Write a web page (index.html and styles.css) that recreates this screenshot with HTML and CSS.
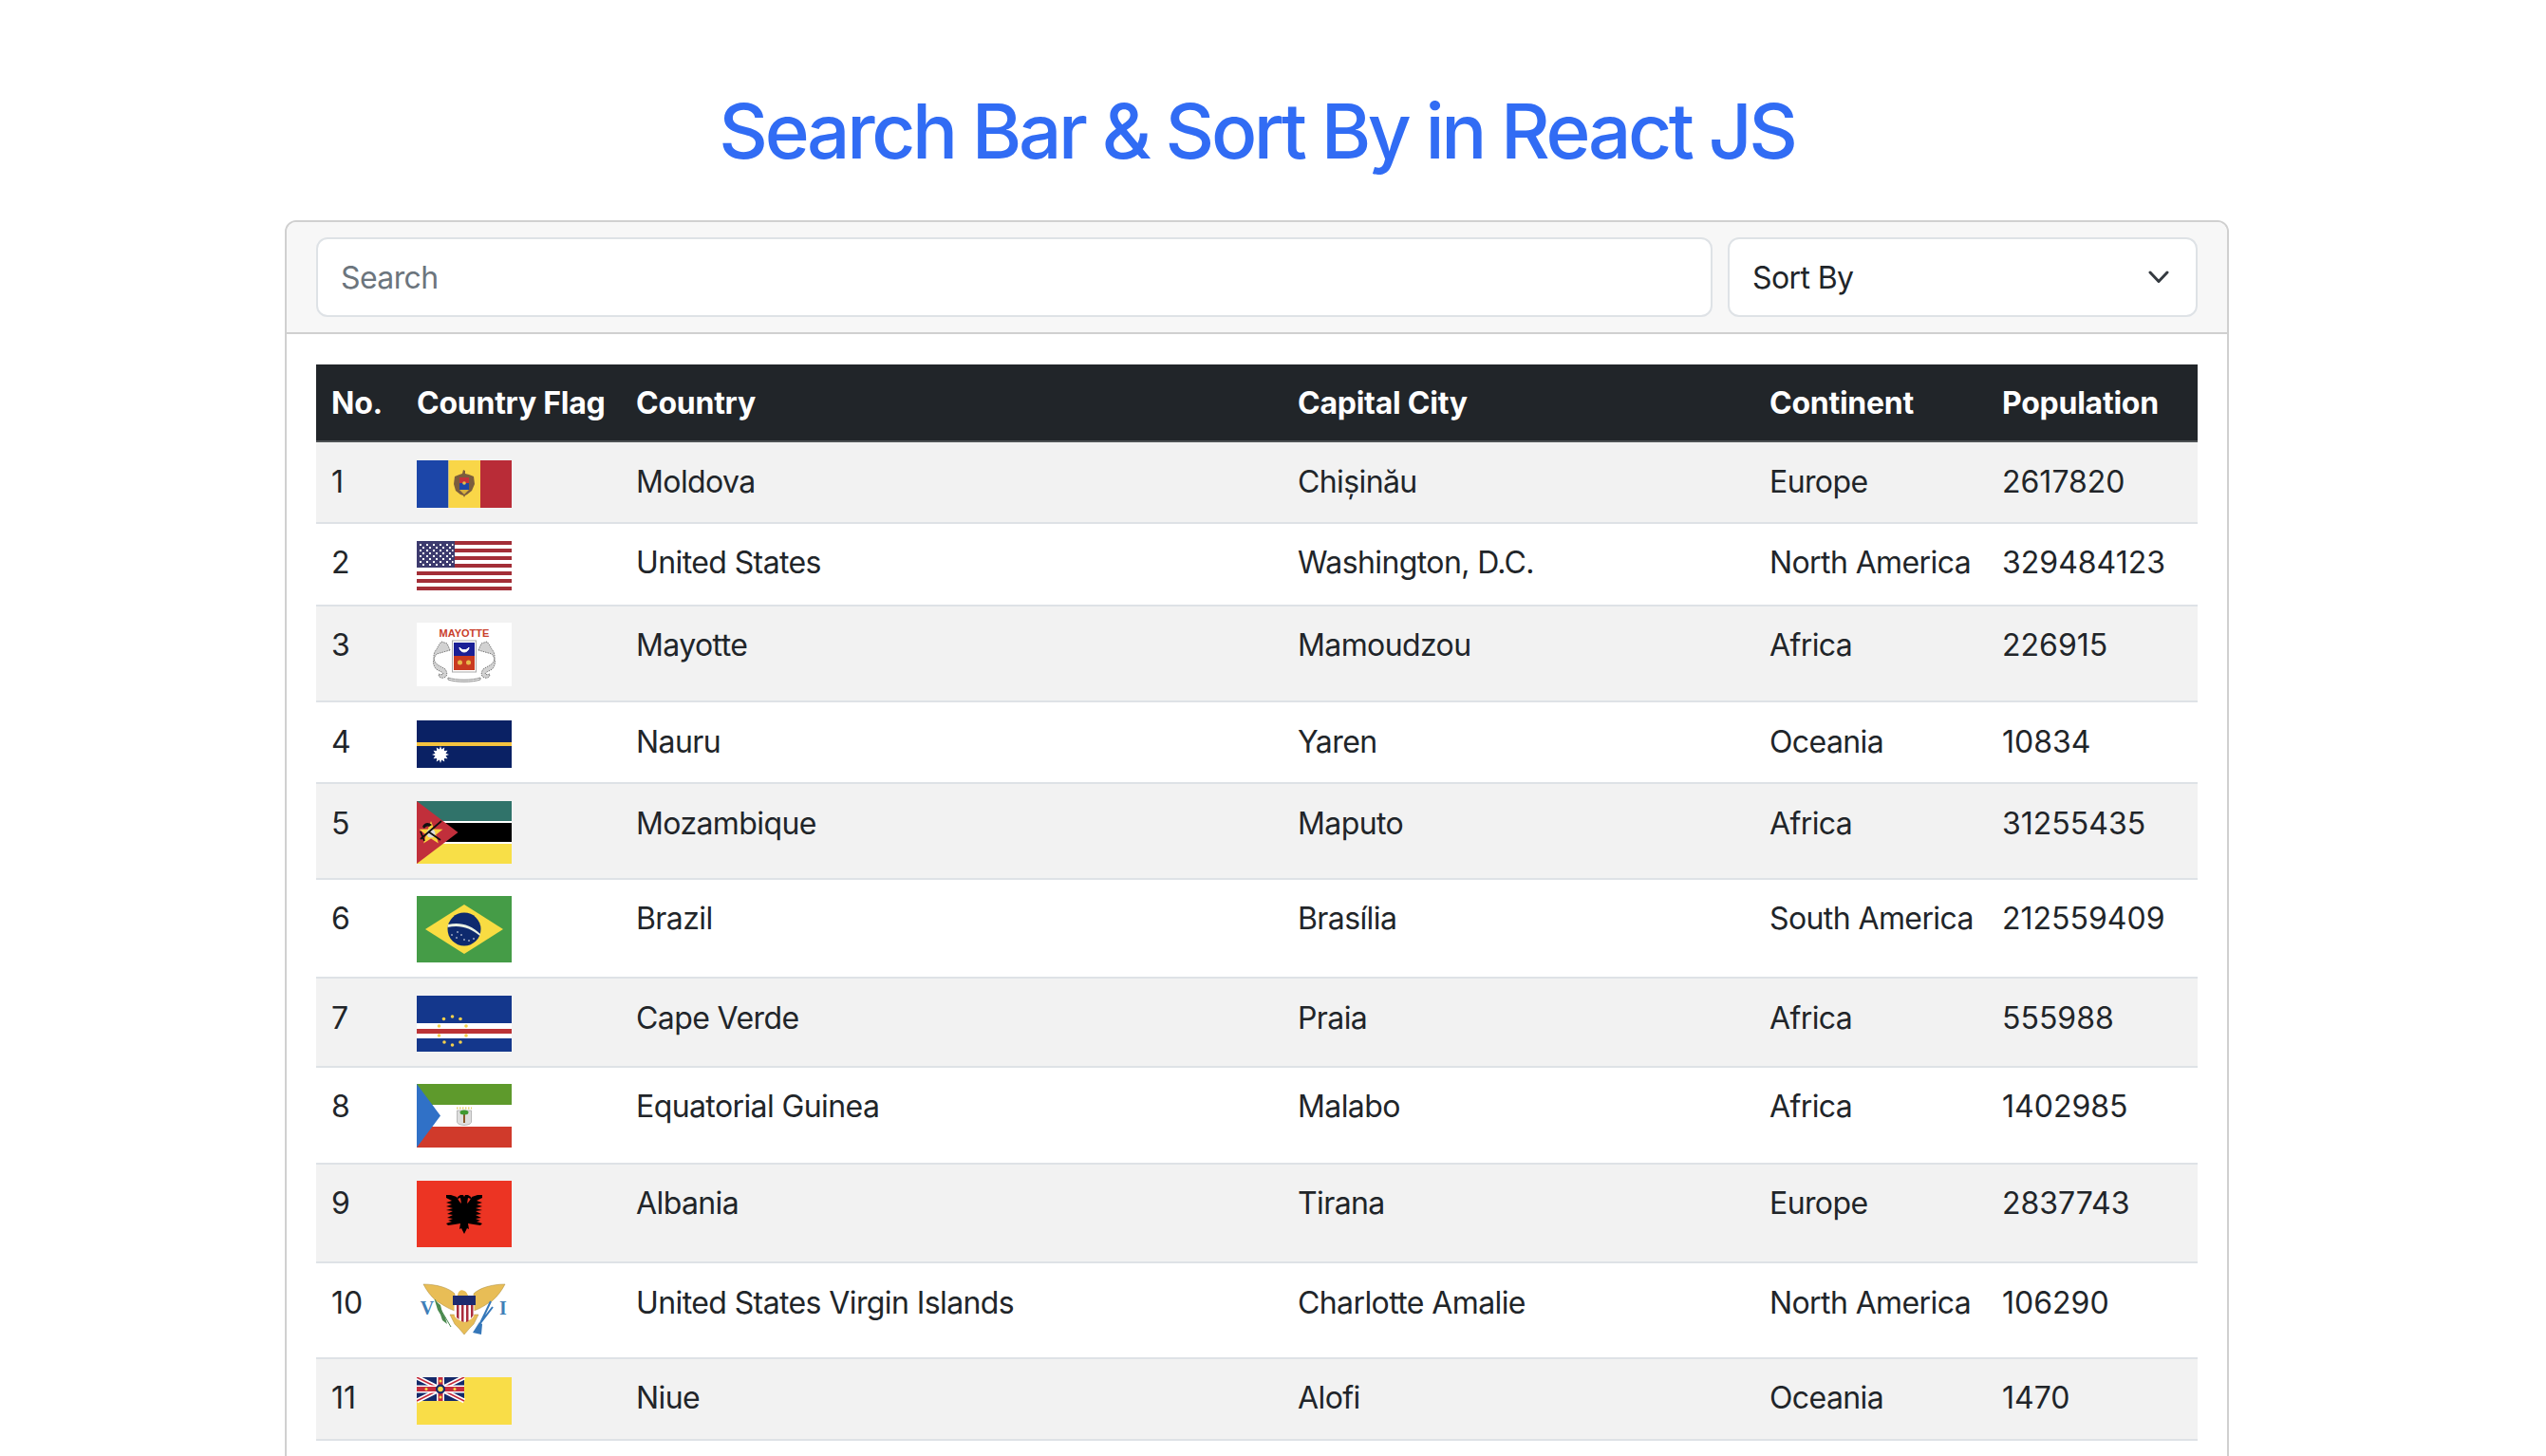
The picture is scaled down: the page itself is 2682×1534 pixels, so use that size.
FILE: index.html
```html
<!DOCTYPE html>
<html lang="en">
<head>
<meta charset="utf-8">
<title>Search Bar &amp; Sort By in React JS</title>
<link rel="stylesheet" href="styles.css">
</head>
<body>
<main class="page">
  <h1 class="title">Search Bar &amp; Sort By in React JS</h1>
  <section class="card">
    <header class="card-header">
      <input class="search" type="text" placeholder="Search">
      <div class="select">
        <span>Sort By</span>
        <svg class="chevron" width="22" height="14" viewBox="0 0 22 14"><path d="M2 2l9 9.500 9-9.500" fill="none" stroke="#343a40" stroke-width="3" stroke-linecap="round" stroke-linejoin="round"/></svg>
      </div>
    </header>
    <div class="card-body">
      <table class="table">
        <colgroup><col class="c-no"><col class="c-flag"><col class="c-country"><col class="c-capital"><col class="c-continent"><col class="c-pop"></colgroup>
        <thead>
          <tr><th>No.</th><th>Country Flag</th><th>Country</th><th>Capital City</th><th>Continent</th><th>Population</th></tr>
        </thead>
        <tbody>
          <tr><td>1</td><td>
            <svg class="flag" width="100" height="50" viewBox="0 0 100 50"><rect width="33.500" height="50" fill="#1c46a8"/><rect x="33.500" width="33.500" height="50" fill="#f9d648"/><rect x="67" width="33" height="50" fill="#b92c37"/><path d="M40 17l5-2 3-1 1-4 2 1 0 3 4 1 5 2 1 8-3 7-5 4-2 1-1 2-1-2-3-1-5-4-2-7z" fill="#7b5d3d"/><rect x="45" y="18" width="10" height="6" fill="#c5303a"/><rect x="45" y="24" width="10" height="7" fill="#1c46a8"/><path d="M45 31h10l-5 5z" fill="#d8b23c"/><circle cx="50" cy="24" r="1.800" fill="#e3c24a"/></svg>
          </td><td>Moldova</td><td>Chișinău</td><td>Europe</td><td>2617820</td></tr>
          <tr><td>2</td><td>
            <svg class="flag" width="100" height="52" viewBox="0 0 100 52"><rect width="100" height="52" fill="#fff"/><path d="M0 0h100v4H0zM0 8h100v4H0zM0 16h100v4H0zM0 24h100v4H0zM0 32h100v4H0zM0 40h100v4H0zM0 48h100v4H0z" fill="#a32e37"/><rect width="40" height="28" fill="#3d3b6e"/><g fill="#fff"><path d="M3 3h2v2H3zM10 3h2v2h-2zM17 3h2v2h-2zM24 3h2v2h-2zM31 3h2v2h-2zM37 3h1.500v2H37zM6 6h2v2H6zM13 6h2v2h-2zM20 6h2v2h-2zM27 6h2v2h-2zM34 6h2v2h-2zM3 9h2v2H3zM10 9h2v2h-2zM17 9h2v2h-2zM24 9h2v2h-2zM31 9h2v2h-2zM37 9h1.500v2H37zM6 12h2v2H6zM13 12h2v2h-2zM20 12h2v2h-2zM27 12h2v2h-2zM34 12h2v2h-2zM3 15h2v2H3zM10 15h2v2h-2zM17 15h2v2h-2zM24 15h2v2h-2zM31 15h2v2h-2zM37 15h1.500v2H37zM6 18h2v2H6zM13 18h2v2h-2zM20 18h2v2h-2zM27 18h2v2h-2zM34 18h2v2h-2zM3 21h2v2H3zM10 21h2v2h-2zM17 21h2v2h-2zM24 21h2v2h-2zM31 21h2v2h-2zM37 21h1.500v2H37zM6 24h2v2H6zM13 24h2v2h-2zM20 24h2v2h-2zM27 24h2v2h-2zM34 24h2v2h-2z"/></g></svg>
          </td><td>United States</td><td>Washington, D.C.</td><td>North America</td><td>329484123</td></tr>
          <tr><td>3</td><td>
            <svg class="flag" width="100" height="67" viewBox="0 0 100 67"><rect width="100" height="67" fill="#fff"/><text class="flag-word" x="50" y="14.500" text-anchor="middle">MAYOTTE</text><rect x="37.500" y="19" width="25" height="33" fill="#fff" stroke="#aaa"/><rect x="39" y="21" width="22" height="14" fill="#1a1f96"/><rect x="39" y="35" width="22" height="15" fill="#c93a20"/><path d="M45 26a5 5 0 0 0 10 0a6 6 0 0 1-10 0z" fill="#fff" stroke="#fff"/><circle cx="45.500" cy="42" r="2.500" fill="#e8b94a"/><circle cx="54.500" cy="42" r="2.500" fill="#e8b94a"/><g fill="#d2d2d2" stroke="#777" stroke-width="1" stroke-dasharray="1.500 1"><path d="M35 29l-3-7-6-2-3 4-2 4c-3 3-4 8-2 13 2 4 7 5 11 8 2 3 3 7-1 9-4 1-6-1-6-4 2 1 4 1 5 0-1-3-7-3-9-7-3-6-1-10 2-14z"/><path d="M65 29l3-7 6-2 3 4 2 4c3 3 4 8 2 13-2 4-7 5-11 8-2 3-3 7 1 9 4 1 6-1 6-4-2 1-4 1-5 0 1-3 7-3 9-7 3-6 1-10-2-14z"/></g><path d="M33 58c8 3 26 3 34 0l0 2c-8 3-26 3-34 0z" fill="none" stroke="#888"/></svg>
          </td><td>Mayotte</td><td>Mamoudzou</td><td>Africa</td><td>226915</td></tr>
          <tr><td>4</td><td>
            <svg class="flag" width="100" height="50" viewBox="0 0 100 50"><rect width="100" height="50" fill="#0a2164"/><rect y="23" width="100" height="4" fill="#f5c33f"/><path d="M25 27l1.200 3.500 3-2 -.300 3.600 3.600-.400-2 3 3.500 1.300-3.500 1.300 2 3-3.600-.400.300 3.600-3-2-1.200 3.500-1.200-3.500-3 2 .300-3.600-3.600.400 2-3-3.500-1.300 3.500-1.300-2-3 3.600.400-.300-3.600 3 2z" fill="#fff"/></svg>
          </td><td>Nauru</td><td>Yaren</td><td>Oceania</td><td>10834</td></tr>
          <tr><td>5</td><td>
            <svg class="flag" width="100" height="66" viewBox="0 0 100 66"><rect width="100" height="21" fill="#30736a"/><rect y="21" width="100" height="24" fill="#fff"/><rect y="23" width="100" height="20" fill="#000"/><rect y="45" width="100" height="21" fill="#f8df47"/><path d="M0 0l43.500 33L0 66z" fill="#c12f3b"/><path d="M15 21l3.200 8.600 9.300.200-7.300 5.800 2.600 9-7.800-5.200-7.800 5.200 2.600-9-7.300-5.800 9.300-.200z" fill="#f8d23c"/><circle cx="15" cy="34" r="4.500" fill="#ddd"/><path d="M4 40l22-19M8 42l-4-10M25 41L12 32" fill="none" stroke="#111" stroke-width="1.800"/><path d="M6 27c2-5 7-5 10-2l-3 2c-2-1-4 0-5 2z" fill="#111"/></svg>
          </td><td>Mozambique</td><td>Maputo</td><td>Africa</td><td>31255435</td></tr>
          <tr><td>6</td><td>
            <svg class="flag" width="100" height="70" viewBox="0 0 100 70"><rect width="100" height="70" fill="#459c47"/><path d="M9 35L50 9l41 26-41 26z" fill="#f9dc42"/><circle cx="50" cy="35" r="17.500" fill="#0e2a6e"/><path d="M33 30c12-3 24 0 34 10l-.500 2c-10-9-22-12-34-9z" fill="#e8f0e4"/><g fill="#fff"><circle cx="37" cy="41" r=".8"/><circle cx="42" cy="44" r=".8"/><circle cx="47" cy="41" r=".8"/><circle cx="50" cy="46" r=".8"/><circle cx="55" cy="47" r=".8"/><circle cx="60" cy="45" r=".8"/><circle cx="43" cy="38" r=".8"/></g></svg>
          </td><td>Brazil</td><td>Brasília</td><td>South America</td><td>212559409</td></tr>
          <tr><td>7</td><td>
            <svg class="flag" width="100" height="59" viewBox="0 0 100 59"><rect width="100" height="59" fill="#14378c"/><rect y="29" width="100" height="16" fill="#fff"/><rect y="35" width="100" height="5" fill="#bc3336"/><g fill="#f3d04c"><circle cx="23.500" cy="32" r="1.800"/><circle cx="28.500" cy="24.500" r="1.800"/><circle cx="37.500" cy="22" r="1.800"/><circle cx="46" cy="24.500" r="1.800"/><circle cx="52" cy="32" r="1.800"/><circle cx="23.500" cy="42" r="1.800"/><circle cx="52" cy="42" r="1.800"/><circle cx="29" cy="49" r="1.800"/><circle cx="37.500" cy="52" r="1.800"/><circle cx="46" cy="49" r="1.800"/></g></svg>
          </td><td>Cape Verde</td><td>Praia</td><td>Africa</td><td>555988</td></tr>
          <tr><td>8</td><td>
            <svg class="flag" width="100" height="67" viewBox="0 0 100 67"><rect width="100" height="22" fill="#5e9a2c"/><rect y="23" width="100" height="21" fill="#fff"/><rect y="45" width="100" height="22" fill="#d03a2b"/><path d="M0 0l25 33.500L0 67z" fill="#3071c7"/><path d="M42.500 28h15v12c0 2-4 3.500-7.500 3.500s-7.500-1.500-7.500-3.500z" fill="#dedede" stroke="#aaa" stroke-width=".8"/><rect x="49" y="30" width="2" height="11" fill="#8a5a2b"/><ellipse cx="50" cy="30" rx="4.500" ry="2.500" fill="#3f9a32"/><path d="M42 25.500h16" stroke="#e3cf6d" stroke-width="2" stroke-dasharray="1.500 1.500"/></svg>
          </td><td>Equatorial Guinea</td><td>Malabo</td><td>Africa</td><td>1402985</td></tr>
          <tr><td>9</td><td>
            <svg class="flag" width="100" height="70" viewBox="0 0 100 70"><rect width="100" height="70" fill="#ec3423"/><g fill="#000"><path d="M50 56L47 50 45 51 46 45 40 46 33 47 31 45 37 43 33 42 38 40 32 39 38 36 32 35 38 32 31 31 38 29 31 27 37 25 31 23 37 21 31 18 31 15 36 15 42 17 45 22 47 24 46 18 43 19 43 17 46 15 49 15 50 17z"/><path d="M50 56L53 50 55 51 54 45 60 46 67 47 69 45 63 43 67 42 62 40 68 39 62 36 68 35 62 32 69 31 62 29 69 27 63 25 69 23 63 21 69 18 69 15 64 15 58 17 55 22 53 24 54 18 57 19 57 17 54 15 51 15 50 17z"/></g></svg>
          </td><td>Albania</td><td>Tirana</td><td>Europe</td><td>2837743</td></tr>
          <tr><td>10</td><td>
            <svg class="flag" width="100" height="66" viewBox="0 0 100 66"><path d="M7 4c14 0 27 4 33 10v18c-9-3-13-7-19-10C15 17 10 10 7 4z" fill="#e8bd56" stroke="#a98a3c" stroke-width=".5"/><path d="M93 4c-14 0-27 4-33 10v18c9-3 13-7 19-10 6-5 11-12 14-18z" fill="#e8bd56" stroke="#a98a3c" stroke-width=".5"/><path d="M43 17c0-6 4-8 7-6 3 1 4 5 6 9H44z" fill="#e8bd56"/><path d="M35 36l5 10 4 4 6 7 6-7 4-4 5-10z" fill="#e8bd56" stroke="#a98a3c" stroke-width=".5"/><rect x="38" y="16" width="24" height="10" fill="#1d2a6e"/><path d="M39.500 26h21v9c0 5-5 7-10.500 9-5.500-2-10.500-4-10.500-9z" fill="#fff"/><path d="M42 26h2.500v15L42 39zM47 26h2.500v18L47 43zM52 26h2.500v17L52 44zM57 26h2.500v11L57 40z" fill="#a92c3c"/><path d="M19 20l17 29" fill="none" stroke="#4b8a4f" stroke-width="1"/><path d="M19 21l6 5 2 8 3 5 2 7-5-4-2-6-3-5z" fill="#4b8a4f"/><path d="M78 22l-11 23M80 28l-13 17" fill="none" stroke="#3577b9" stroke-width="2"/><path d="M66 44l-7 11 9 2 1-11z" fill="#3577b9"/><text class="flag-letter" x="11" y="36" text-anchor="middle">V</text><text class="flag-letter" x="91" y="36" text-anchor="middle">I</text></svg>
          </td><td>United States Virgin Islands</td><td>Charlotte Amalie</td><td>North America</td><td>106290</td></tr>
          <tr><td>11</td><td>
            <svg class="flag" width="100" height="50" viewBox="0 0 100 50"><rect width="100" height="50" fill="#f9dd48"/><rect width="50" height="25" fill="#14296a"/><path d="M0 0l50 25M50 0L0 25" stroke="#fff" stroke-width="5"/><path d="M0 0l50 25M50 0L0 25" stroke="#c52b3c" stroke-width="1.600"/><path d="M25 0v25M0 12.500h50" stroke="#fff" stroke-width="8"/><path d="M25 0v25M0 12.500h50" stroke="#c52b3c" stroke-width="5"/><circle cx="25" cy="12.500" r="5" fill="#14296a"/><g fill="#f9dd48"><circle cx="25" cy="12.500" r="2.800"/><circle cx="25" cy="4" r="1.500"/><circle cx="25" cy="21" r="1.500"/><circle cx="10" cy="12.500" r="1.500"/><circle cx="40" cy="12.500" r="1.500"/></g></svg>
          </td><td>Niue</td><td>Alofi</td><td>Oceania</td><td>1470</td></tr>
        </tbody>
      </table>
    </div>
  </section>
</main>
</body>
</html>
```
FILE: styles.css
```css
* { box-sizing: border-box; }
html, body { margin: 0; height: 100%; overflow: hidden; }
body {
  background: #fff;
  color: #212529;
  font-family: Inter, "Liberation Sans", sans-serif;
  font-size: 32px;
  line-height: 48px;
  letter-spacing: -0.6px;
  padding-right: 34px;
}
.page { width: 2048px; margin: 0 auto; padding-top: 90px; }
.title {
  margin: 0 0 46px;
  text-align: center;
  color: #316cf4;
  font-size: 80px;
  line-height: 96px;
  font-weight: 500;
  letter-spacing: -3.35px;
}
.card {
  border: 2px solid #d0d0d0;
  border-radius: 12px;
  background: #fff;
  min-height: 1400px;
}
.card-header {
  display: flex;
  gap: 16px;
  padding: 16px 31px;
  background: #f7f7f7;
  border-bottom: 2px solid #d0d0d0;
  border-radius: 10px 10px 0 0;
}
.search, .select {
  height: 84px;
  background: #fff;
  border: 2px solid #dee2e6;
  border-radius: 12px;
  padding: 0 24px;
  font: inherit;
  letter-spacing: -0.6px;
  color: #212529;
}
.search { flex: 1 1 auto; min-width: 0; }
.search::placeholder { color: #6c757d; opacity: 1; }
.select {
  flex: 0 0 495px;
  display: flex;
  align-items: center;
  justify-content: space-between;
  padding-top: 2px;
}
.chevron { margin-right: 4px; margin-top: -2px; }
.card-body { padding: 32px 31px; }
.table { width: 100%; border-collapse: collapse; table-layout: fixed; }
.c-no { width: 90px; }
.c-flag { width: 231px; }
.c-country { width: 697px; }
.c-capital { width: 497px; }
.c-continent { width: 245px; }
.c-pop { width: 222px; }
th, td { text-align: left; vertical-align: top; white-space: nowrap; }
td { padding: 17.5px 16px 15.100px; }
td:first-child, td:last-child { letter-spacing: 0; }
th { padding: 17px 16px 15px; }
thead th {
  background: #212529;
  color: #fff;
  font-weight: 700;
  letter-spacing: -0.25px;
  border-bottom: 2px solid #4d5154;
}
tbody td { border-bottom: 2px solid #dee2e6; }
tbody tr:nth-child(odd) td { background: #f2f2f2; }
.flag { vertical-align: middle; }
.flag-word { font: 700 11px "Liberation Sans", sans-serif; letter-spacing: 0; fill: #c9402c; }
.flag-letter { font: 700 20px "Liberation Serif", serif; letter-spacing: 0; fill: #3f7fb8; }
```
